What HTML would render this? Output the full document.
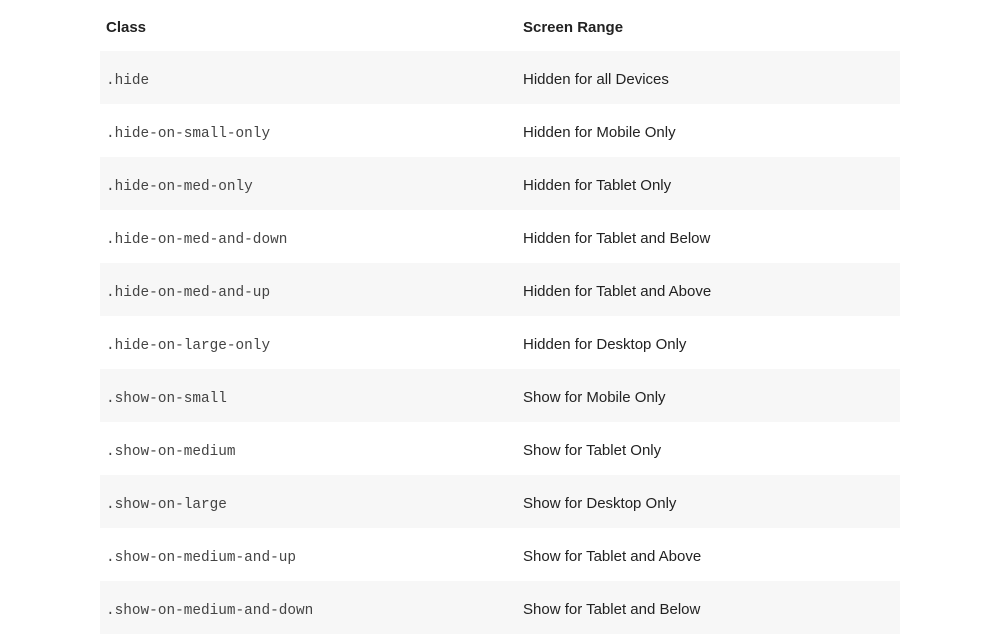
<!DOCTYPE html>
<html><head><style>
body{margin:0;background:#fff;font-family:"Liberation Sans",sans-serif;color:#222;}
table{position:absolute;left:100px;top:0;width:800px;border-collapse:collapse;table-layout:fixed;}
td,th{height:53px;padding:3px 0 0 6px;box-sizing:border-box;text-align:left;font-size:15px;vertical-align:middle;}
td:first-child{padding-top:4px;}
th{height:51px;font-weight:bold;}
col.a{width:417px;}
tr:nth-child(even) td{background:#f7f7f7;}
code{font-family:"Liberation Mono",monospace;font-size:14.4px;color:#444;}
</style></head><body>
<table>
<colgroup><col class="a"><col></colgroup>
<tr><th>Class</th><th>Screen Range</th></tr>
<tr><td><code>.hide</code></td><td>Hidden for all Devices</td></tr>
<tr><td><code>.hide-on-small-only</code></td><td>Hidden for Mobile Only</td></tr>
<tr><td><code>.hide-on-med-only</code></td><td>Hidden for Tablet Only</td></tr>
<tr><td><code>.hide-on-med-and-down</code></td><td>Hidden for Tablet and Below</td></tr>
<tr><td><code>.hide-on-med-and-up</code></td><td>Hidden for Tablet and Above</td></tr>
<tr><td><code>.hide-on-large-only</code></td><td>Hidden for Desktop Only</td></tr>
<tr><td><code>.show-on-small</code></td><td>Show for Mobile Only</td></tr>
<tr><td><code>.show-on-medium</code></td><td>Show for Tablet Only</td></tr>
<tr><td><code>.show-on-large</code></td><td>Show for Desktop Only</td></tr>
<tr><td><code>.show-on-medium-and-up</code></td><td>Show for Tablet and Above</td></tr>
<tr><td><code>.show-on-medium-and-down</code></td><td>Show for Tablet and Below</td></tr>
</table>
</body></html>
